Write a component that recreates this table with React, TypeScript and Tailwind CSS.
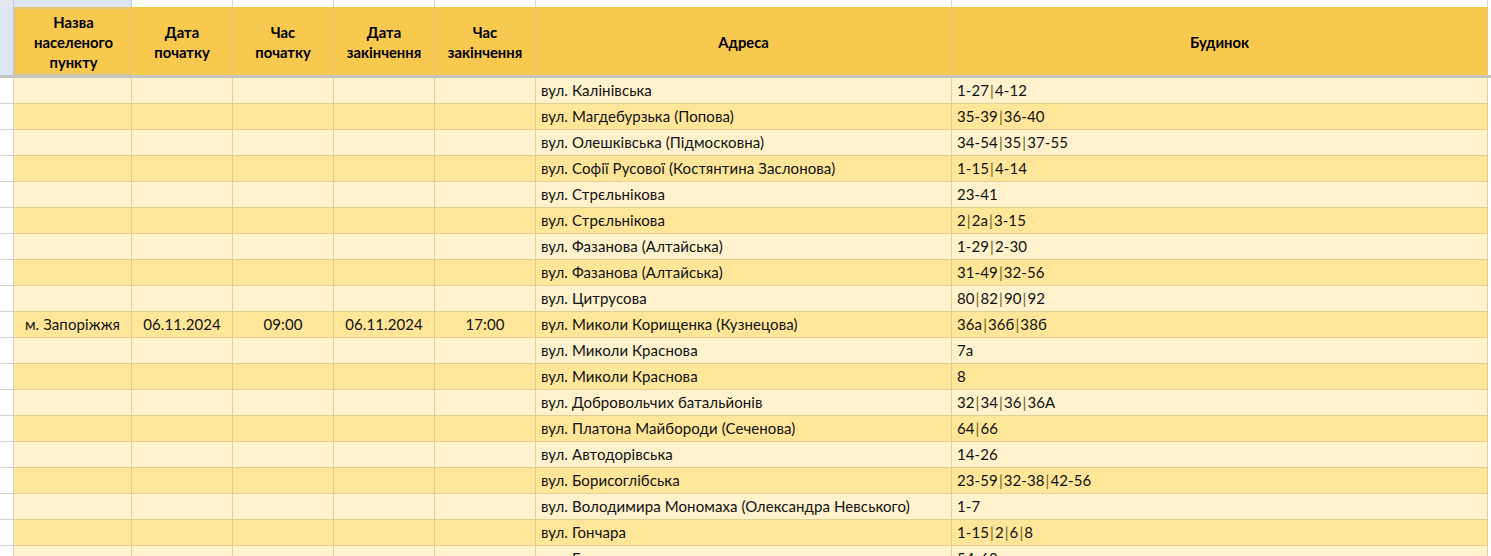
import React from "react";

const rows: [string, string][] = [
  ["вул. Калінівська", "1-27|4-12"],
  ["вул. Магдебурзька (Попова)", "35-39|36-40"],
  ["вул. Олешківська (Підмосковна)", "34-54|35|37-55"],
  ["вул. Софії Русової (Костянтина Заслонова)", "1-15|4-14"],
  ["вул. Стрєльнікова", "23-41"],
  ["вул. Стрєльнікова", "2|2а|3-15"],
  ["вул. Фазанова (Алтайська)", "1-29|2-30"],
  ["вул. Фазанова (Алтайська)", "31-49|32-56"],
  ["вул. Цитрусова", "80|82|90|92"],
  ["вул. Миколи Корищенка (Кузнецова)", "36а|36б|38б"],
  ["вул. Миколи Краснова", "7а"],
  ["вул. Миколи Краснова", "8"],
  ["вул. Добровольчих батальйонів", "32|34|36|36А"],
  ["вул. Платона Майбороди (Сеченова)", "64|66"],
  ["вул. Автодорівська", "14-26"],
  ["вул. Борисоглібська", "23-59|32-38|42-56"],
  ["вул. Володимира Мономаха (Олександра Невського)", "1-7"],
  ["вул. Гончара", "1-15|2|6|8"],
  ["вул. Гоголя", "54-63"],
];

const cols = "grid-cols-[14px_118px_101px_101px_101px_101px_416px_536px_3px]";

function Houses({ v }: { v: string }) {
  const parts = v.split("|");
  return (
    <>
      {parts.map((p, i) => (
        <React.Fragment key={i}>
          {i > 0 && <span className="text-[#6e5c1c] px-[1px]">|</span>}
          {p}
        </React.Fragment>
      ))}
    </>
  );
}

export default function App() {
  const font = "font-['Lato','Open_Sans',sans-serif]";
  const headCell =
    "flex items-center justify-center text-center font-bold text-[14.8px] leading-[20px] text-black bg-[#f7c94f] border-r border-[#e3c572] pt-[2px]";
  return (
    <div className={`w-[1491px] h-[556px] overflow-hidden bg-white ${font}`}>
      {/* column header strip */}
      <div className={`grid ${cols} h-[7px]`}>
        <div className="bg-[#e4e8ef] border-r border-[#c8ccd4]" />
        <div className="bg-[#dce6f7] border-r border-[#c8d2e2]" />
        <div className="border-r border-[#dadada]" />
        <div className="border-r border-[#dadada]" />
        <div className="border-r border-[#dadada]" />
        <div className="border-r border-[#dadada]" />
        <div className="border-r border-[#dadada]" />
        <div className="border-r border-[#dadada]" />
        <div />
      </div>
      {/* header row */}
      <div className={`grid ${cols} h-[68px]`}>
        <div className="bg-[#dce6f7] border-r border-[#b9c5da]" />
        <div className={`${headCell} border-2 border-[#3b6fc0]`}>
          Назва
          <br />
          населеного
          <br />
          пункту
        </div>
        <div className={headCell}>
          Дата
          <br />
          початку
        </div>
        <div className={headCell}>
          Час
          <br />
          початку
        </div>
        <div className={headCell}>
          Дата
          <br />
          закінчення
        </div>
        <div className={headCell}>
          Час
          <br />
          закінчення
        </div>
        <div className={headCell}>Адреса</div>
        <div className={headCell}>Будинок</div>
        <div className="bg-white" />
      </div>
      {/* freeze line */}
      <div className="h-[3px] bg-[#c4c4c4]" />
      {/* data rows */}
      {rows.map(([addr, house], i) => {
        const bg = i % 2 === 0 ? "bg-[#fff2cc]" : "bg-[#ffe699]";
        const cell = `${bg} border-r border-b border-[#e3cf92] h-[26px] flex items-center text-[15px] tracking-[0.1px] text-[#111]`;
        const main = i === 9;
        return (
          <div key={i} className={`grid ${cols}`}>
            <div className="h-[26px] bg-white border-r border-b border-[#d4d4d4]" />
            <div className={`${cell} justify-center`}>{main ? "м. Запоріжжя" : ""}</div>
            <div className={`${cell} justify-center`}>{main ? "06.11.2024" : ""}</div>
            <div className={`${cell} justify-center`}>{main ? "09:00" : ""}</div>
            <div className={`${cell} justify-center`}>{main ? "06.11.2024" : ""}</div>
            <div className={`${cell} justify-center`}>{main ? "17:00" : ""}</div>
            <div className={`${cell} pl-[5px] whitespace-nowrap`}>{addr}</div>
            <div className={`${cell} pl-[5px] whitespace-nowrap`}>
              <Houses v={house} />
            </div>
            <div className="h-[26px] bg-white" />
          </div>
        );
      })}
    </div>
  );
}
